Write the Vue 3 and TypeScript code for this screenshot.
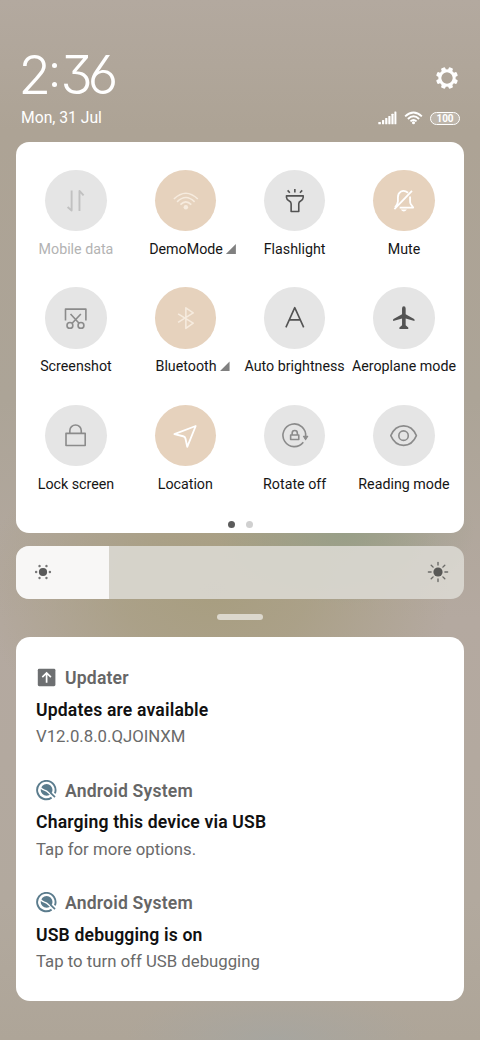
<script setup lang="ts">
interface Tile {
  label: string
  icon: string
  state?: 'on' | 'disabled'
  more?: boolean
}

interface Notice {
  app: string
  title: string
  text: string
  icon: 'updater' | 'system'
}

const tiles: Tile[] = [
  { label: 'Mobile data', icon: 'data', state: 'disabled' },
  { label: 'DemoMode', icon: 'wlan', state: 'on', more: true },
  { label: 'Flashlight', icon: 'torch' },
  { label: 'Mute', icon: 'mute', state: 'on' },
  { label: 'Screenshot', icon: 'screenshot' },
  { label: 'Bluetooth', icon: 'bluetooth', state: 'on', more: true },
  { label: 'Auto brightness', icon: 'auto' },
  { label: 'Aeroplane mode', icon: 'plane' },
  { label: 'Lock screen', icon: 'lock' },
  { label: 'Location', icon: 'location', state: 'on' },
  { label: 'Rotate off', icon: 'rotate' },
  { label: 'Reading mode', icon: 'eye' },
]

const notices: Notice[] = [
  { app: 'Updater', title: 'Updates are available', text: 'V12.0.8.0.QJOINXM', icon: 'updater' },
  { app: 'Android System', title: 'Charging this device via USB', text: 'Tap for more options.', icon: 'system' },
  { app: 'Android System', title: 'USB debugging is on', text: 'Tap to turn off USB debugging', icon: 'system' },
]

const brightness = 20.8
const gearTeeth = [0, 45, 90, 135, 180, 225, 270, 315]
const dimRays = [0, 60, 120, 180, 240, 300]
</script>

<template>
  <main class="shade">
    <header class="header">
      <div class="row top">
        <div class="clock"><span>2</span><span class="colon"><i></i><i></i></span><span>3</span><span>6</span></div>
        <svg class="gear" viewBox="0 0 24 24">
          <rect v-for="a in gearTeeth" :key="a" x="9.8" y="1" width="4.4" height="5" rx="1.2" :transform="`rotate(${a + 22.5} 12 12)`" fill="#fff" />
          <circle cx="12" cy="12" r="7.2" fill="none" stroke="#fff" stroke-width="3" />
        </svg>
      </div>
      <div class="row">
        <span class="date">Mon, 31 Jul</span>
        <div class="status">
          <svg class="signal" viewBox="0 0 19 14" fill="#fff">
            <rect x="0.3" y="11" width="2.6" height="2.2" rx=".5" />
            <rect x="4" y="9" width="2.2" height="4.2" rx=".5" />
            <rect x="7.2" y="7" width="2.2" height="6.2" rx=".5" />
            <rect x="10.3" y="5" width="2.2" height="8.2" rx=".5" />
            <rect x="13.4" y="2.8" width="2.2" height="10.4" rx=".5" />
            <rect x="16.4" y="0.4" width="2" height="12.8" rx=".5" />
          </svg>
          <svg class="wifi" viewBox="0 0 20 14" fill="none" stroke="#fff" stroke-width="2">
            <path d="M1.2 5.3Q10-2.7 18.8 5.3" />
            <path d="M4.1 8Q10 2.5 15.9 8" />
            <path d="M6.8 10.6Q10 7.6 13.2 10.6" />
            <circle cx="10" cy="12" r="1.6" fill="#fff" stroke="none" />
          </svg>
          <span class="battery">100</span>
        </div>
      </div>
    </header>

    <section class="panel">
      <div class="grid">
        <div v-for="t in tiles" :key="t.label" class="tile" :class="[t.state, t.icon]">
          <div class="disc">
            <svg viewBox="0 0 61 61" fill="none" stroke="currentColor" stroke-width="1.6" stroke-linejoin="round">
              <template v-if="t.icon === 'data'">
                <path stroke-width="1.9" d="M26.5 20.5V40.4L22.5 36.8M34.3 40.7V20.8L38.4 25.3" />
              </template>
              <template v-else-if="t.icon === 'wlan'">
                <path d="M18.8 28.9Q30.7 17.4 42.6 28.9M22 31.7Q30.7 23 39.4 31.7M25.3 34.5Q30.7 29 36.1 34.5" />
                <circle cx="30.7" cy="37" r="2.2" fill="currentColor" stroke="none" />
              </template>
              <template v-else-if="t.icon === 'torch'">
                <path d="M22.4 25.7H39V27.4Q38.8 29.6 36.8 30.6Q34.6 31.8 34.6 33.5V41.3H27V33.5Q27 31.8 24.8 30.6Q22.6 29.6 22.4 27.4ZM23.5 20.3L25.7 22.6M30.7 19V22.4M38 20.3L35.8 22.6" />
              </template>
              <template v-else-if="t.icon === 'mute'">
                <path stroke-width="1.8" d="M34.9 22.7C29.6 18.5 24.8 22 24.8 27.2V31.2Q24.6 34 22 37.2M26.5 37.4H40L37.5 33.8Q36.9 32.6 36.9 31V26.3M38.8 20.8L21.3 39" />
                <path stroke="none" fill="currentColor" d="M27.6 39.4H33.8Q30.7 43.2 27.6 39.4Z" />
              </template>
              <template v-else-if="t.icon === 'screenshot'">
                <path d="M20.4 33.3V22H40.7V33.3M25.4 26.8L33.9 36.1M35.7 26.8L27 36.1" />
                <circle cx="24.8" cy="38.2" r="2.9" /><circle cx="35.8" cy="38.2" r="2.9" />
              </template>
              <template v-else-if="t.icon === 'bluetooth'">
                <path d="M23 26.7L38 36L30.7 41.2V20.8L38 25.8L23 35.2" />
              </template>
              <template v-else-if="t.icon === 'auto'">
                <path d="M21.8 40.2L30.6 20.6L39.5 40.2M25 32.7H36.2" />
              </template>
              <template v-else-if="t.icon === 'plane'">
                <path stroke="none" fill="currentColor" d="M30.7 19.2Q32.5 19.2 32.5 21.5V27L40.9 31.8Q41.6 32.4 41.3 33.8L32.5 31.3V38.1L35.1 40.3V41.9H26.3V40.3L28.9 38.1V31.3L20.1 33.8Q19.7 32.4 20.4 31.8L28.9 27V21.5Q28.9 19.2 30.7 19.2Z" />
              </template>
              <template v-else-if="t.icon === 'lock'">
                <path d="M20.9 28.2H40V40.3H20.9ZM24.7 28.2V25.6A5.7 5.7 0 0 1 36.1 25.6V28.2" />
              </template>
              <template v-else-if="t.icon === 'location'">
                <path stroke-width="1.8" d="M40.5 20.9L19.3 29L28 31.1Q29.9 31.6 30.3 33.4L32.1 41.6Z" />
              </template>
              <template v-else-if="t.icon === 'rotate'">
                <path d="M41.4 31.5A11.3 11.3 0 1 0 39.1 37.1M26.5 29.9H34.6V34.4H26.5ZM28 29.9V28A2.6 2.6 0 0 1 33.2 28V29.9" />
                <path fill="currentColor" stroke-width="1" d="M39.2 31.2H43.6L41.4 34.6Z" />
              </template>
              <template v-else>
                <path d="M17.7 30.5C23.2 17.6 37.7 17.6 43.2 30.5C37.7 43.4 23.2 43.4 17.7 30.5Z" />
                <circle cx="30.4" cy="30.5" r="4.7" />
              </template>
            </svg>
          </div>
          <div class="label">{{ t.label }}<i v-if="t.more" class="corner"></i></div>
        </div>
      </div>
      <div class="pager"><i class="current"></i><i></i></div>
    </section>

    <section class="slider">
      <div class="fill" :style="{ width: brightness + '%' }"></div>
      <svg class="sun" viewBox="-11 -11 22 22">
        <circle r="4.1" fill="#5a5a5a" />
        <circle v-for="a in dimRays" :key="a" cx="6.9" cy="0" r="1.25" fill="#777" :transform="`rotate(${a})`" />
      </svg>
      <svg class="sun" viewBox="-11 -11 22 22">
        <circle r="4.6" fill="#585856" />
        <path v-for="a in gearTeeth" :key="a" d="M6.9 0H9.6" stroke="#6b6b68" stroke-width="1.4" stroke-linecap="round" :transform="`rotate(${a})`" />
      </svg>
    </section>

    <div class="handle"></div>

    <section class="notices">
      <article v-for="n in notices" :key="n.title">
        <div class="app">
          <svg v-if="n.icon === 'updater'" viewBox="0 0 22 22">
            <rect x="1.8" y="1.8" width="17.6" height="17.4" rx="1.4" fill="#6d6f71" />
            <path d="M10.6 15.8V6.6M6.3 10.2L10.6 6L14.9 10.2" fill="none" stroke="#fff" stroke-width="1.7" />
          </svg>
          <svg v-else viewBox="0 0 22 22">
            <path d="M15.6 17.6A9.2 9.2 0 1 1 18.9 13.4" fill="none" stroke="#5b7c8d" stroke-width="1.9" />
            <circle cx="10.6" cy="9.9" r="5.9" fill="#5b7c8d" />
            <path d="M4.4 7.6Q6.2 9.4 8.4 10.2Q10.8 11 12.6 12.8L15.6 15.6" fill="none" stroke="#fff" stroke-width="1.4" />
            <path d="M14.6 12.8L19 17.2" stroke="#5b7c8d" stroke-width="1.7" />
          </svg>
          <span>{{ n.app }}</span>
        </div>
        <h2>{{ n.title }}</h2>
        <p>{{ n.text }}</p>
      </article>
    </section>
  </main>
</template>

<style>
body {
  margin: 0;
}
</style>

<style scoped>
.shade {
  box-sizing: border-box;
  width: 480px;
  height: 1040px;
  padding: 48px 16px 0;
  overflow: hidden;
  font-family: Roboto, "Liberation Sans", sans-serif;
  color: #161616;
  background:
    radial-gradient(ellipse 130px 75px at 345px 530px, rgba(148, 158, 134, 0.85), rgba(148, 158, 134, 0) 100%),
    radial-gradient(ellipse 235px 165px at 215px 590px, rgba(167, 157, 126, 0.95), rgba(167, 157, 126, 0.7) 40%, rgba(167, 157, 126, 0) 100%),
    radial-gradient(ellipse 150px 50px at 275px 1040px, rgba(162, 166, 164, 0.6), rgba(162, 166, 164, 0) 100%),
    linear-gradient(180deg, #b3a99f 0, #ada395 130px, #aca497 400px, #b4a9a0 620px, #b2a99e 900px, #aea598 1040px);
}

.header {
  height: 94px;
  color: #fff;
}

.row {
  display: flex;
  justify-content: space-between;
  align-items: center;
  padding: 0 4px 0 5px;
}

.top {
  height: 60px;
}

.clock {
  display: flex;
  align-items: center;
  height: 52px;
  margin: -7px 0 0 -2.5px;
  font: 260 53px/52px Inter, "Open Sans", sans-serif;
  font-feature-settings: "cv09", "cv03";
  letter-spacing: -5px;
}

.colon {
  display: flex;
  flex-direction: column;
  justify-content: space-between;
  width: 5px;
  height: 24px;
  margin: 1px 3.5px 0 6px;
}

.colon i {
  width: 5px;
  height: 5px;
  border-radius: 50%;
  background: #fff;
}

.gear {
  width: 24px;
  height: 24px;
  margin-right: 1.5px;
}

.date {
  font-size: 15.7px;
  line-height: 20px;
}

.status {
  display: flex;
  align-items: center;
  gap: 7px;
}

.signal,
.wifi {
  width: 19px;
  height: 14px;
}

.battery {
  box-sizing: border-box;
  width: 30px;
  height: 13px;
  border: 1.3px solid #fff;
  border-radius: 7px;
  background: rgba(255, 255, 255, 0.2);
  font: 700 10px/11px Roboto, sans-serif;
  text-align: center;
}

.panel {
  display: flex;
  flex-direction: column;
  height: 391px;
  border-radius: 13px;
  background: #fff;
}

.grid {
  display: grid;
  grid-template-columns: repeat(4, 109.33px);
  grid-auto-rows: 117.3px;
  padding: 28.2px 5.3px 0;
}

.tile {
  display: flex;
  flex-direction: column;
  align-items: center;
}

.disc {
  width: 61.3px;
  height: 61.3px;
  border-radius: 50%;
  background: #e5e5e5;
  color: #8b8b8b;
}

.disc svg {
  display: block;
  width: 100%;
  height: 100%;
}

.torch .disc,
.auto .disc,
.plane .disc {
  color: #535353;
}

.on .disc {
  background: #e6d2bd;
  color: #fff;
}

.wlan .disc,
.bluetooth .disc {
  color: #f6ebde;
}

.disabled .disc {
  color: #c1c1c1;
}

.label {
  position: relative;
  margin-top: 7.6px;
  font-size: 14.25px;
  line-height: 20px;
  white-space: nowrap;
}

.wlan .label,
.bluetooth .label {
  margin-left: 1.5px;
}

.disabled .label {
  color: #b3b3b3;
}

.corner {
  position: absolute;
  left: calc(100% + 3px);
  bottom: 5px;
  width: 10px;
  height: 10px;
  background: #808080;
  clip-path: polygon(100% 0, 100% 100%, 0 100%);
}

.pager {
  display: flex;
  justify-content: center;
  gap: 11px;
  margin-top: -1px;
}

.pager i {
  width: 7px;
  height: 7px;
  border-radius: 50%;
  background: #d0d0d0;
}

.pager .current {
  background: #5c5c5c;
}

.slider {
  position: relative;
  display: flex;
  align-items: center;
  justify-content: space-between;
  box-sizing: border-box;
  height: 53.3px;
  margin-top: 12.7px;
  padding: 0 15.5px;
  border-radius: 13px;
  overflow: hidden;
  background: rgba(218, 216, 210, 0.9);
}

.fill {
  position: absolute;
  inset: 0 auto 0 0;
  background: rgba(255, 255, 255, 0.82);
}

.sun {
  position: relative;
  width: 22px;
  height: 22px;
}

.handle {
  width: 46.6px;
  height: 6px;
  margin: 15px auto 17.3px;
  border-radius: 3px;
  background: #dcd8cd;
}

.notices {
  box-sizing: border-box;
  height: 363.7px;
  padding: 29.2px 20px 0;
  border-radius: 14px;
  background: #fff;
}

article {
  height: 112.5px;
}

.app {
  display: flex;
  align-items: center;
  gap: 7px;
  height: 24px;
  color: #666;
  font-size: 17.6px;
  font-weight: 600;
  letter-spacing: 0.18px;
}

.app svg {
  width: 22px;
  height: 22px;
}

h2 {
  margin: 7.2px 0 0;
  font-size: 17.6px;
  font-weight: 600;
  letter-spacing: 0.16px;
  line-height: 24px;
  color: #111;
}

p {
  margin: 2.8px 0 0;
  font-size: 16.75px;
  line-height: 24px;
  color: #6a6a6a;
}
</style>
